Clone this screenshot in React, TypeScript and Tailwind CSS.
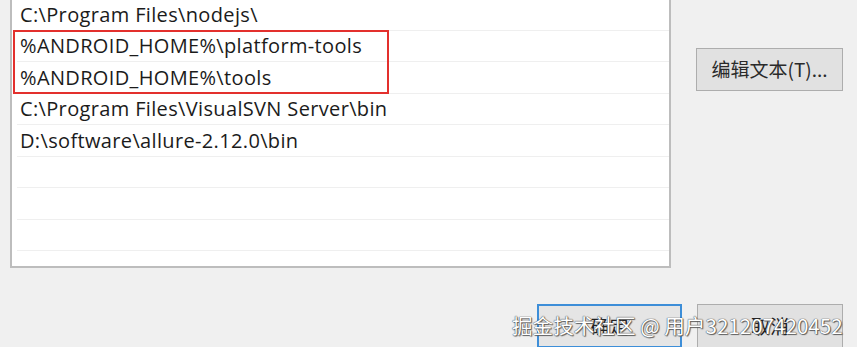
import React from "react";

const rows: { text: string; h: string }[] = [
  { text: "C:\\Program Files\\nodejs\\", h: "h-[31px]" },
  { text: "%ANDROID_HOME%\\platform-tools", h: "h-[31px]" },
  { text: "%ANDROID_HOME%\\tools", h: "h-[32px]" },
  { text: "C:\\Program Files\\VisualSVN Server\\bin", h: "h-[31px]" },
  { text: "D:\\software\\allure-2.12.0\\bin", h: "h-[32px]" },
  { text: "", h: "h-[31px]" },
  { text: "", h: "h-[32px]" },
  { text: "", h: "h-[31px]" },
];

const latin = "font-['Open_Sans','Noto_Sans_CJK_SC',sans-serif]";
const cjk = "font-['Noto_Sans_CJK_SC','Microsoft_YaHei',sans-serif]";

export default function App() {
  return (
    <div className="relative w-[857px] h-[347px] overflow-hidden bg-[#f0f0f0]">
      <div className="flex items-start">
        <div className="relative ml-[10px] w-[661px] h-[268px] bg-white border-x-2 border-b-2 border-[#bdbdbd]">
          {rows.map((r, i) => (
            <div key={i} className={`${r.h} flex flex-col`}>
              <div
                className={`flex-1 flex items-center pl-[8px] text-[20px] tracking-[0.35px] text-[#1b1b1b] ${latin}`}
              >
                {r.text}
              </div>
              <div className="ml-[5px] h-px bg-[#efefef]" />
            </div>
          ))}
          <div className="absolute left-[1px] top-[30px] w-[376px] h-[64px] border-2 border-[#e3302d]" />
        </div>
        <div className="ml-[25px] mt-[48px]">
          <div
            className={`w-[147px] h-[43px] flex items-center justify-center bg-[#e1e1e1] border border-[#adadad] text-[19px] text-[#2a2a2a] ${cjk}`}
          >
            编辑文本(T)...
          </div>
        </div>
      </div>
      <div className="flex justify-end gap-[15px] pr-[14px] mt-[36px]">
        <div
          className={`w-[145px] h-[44px] flex items-center justify-center bg-[#e5e5e5] border-2 border-[#3d8ed8] text-[19px] text-[#222] ${cjk}`}
        >
          确定
        </div>
        <div
          className={`w-[146px] h-[44px] flex items-center justify-center bg-[#e1e1e1] border border-[#adadad] text-[19px] text-[#222] ${cjk}`}
        >
          取消
        </div>
      </div>
      <div
        className={`absolute left-[512px] top-[310px] text-[20.6px] leading-[30px] text-white whitespace-nowrap ${cjk} [text-shadow:0_0_1px_#444,0_0_1px_#444,1px_1px_1px_#666]`}
      >
        掘金技术社区 @ 用户321207420452
      </div>
    </div>
  );
}
